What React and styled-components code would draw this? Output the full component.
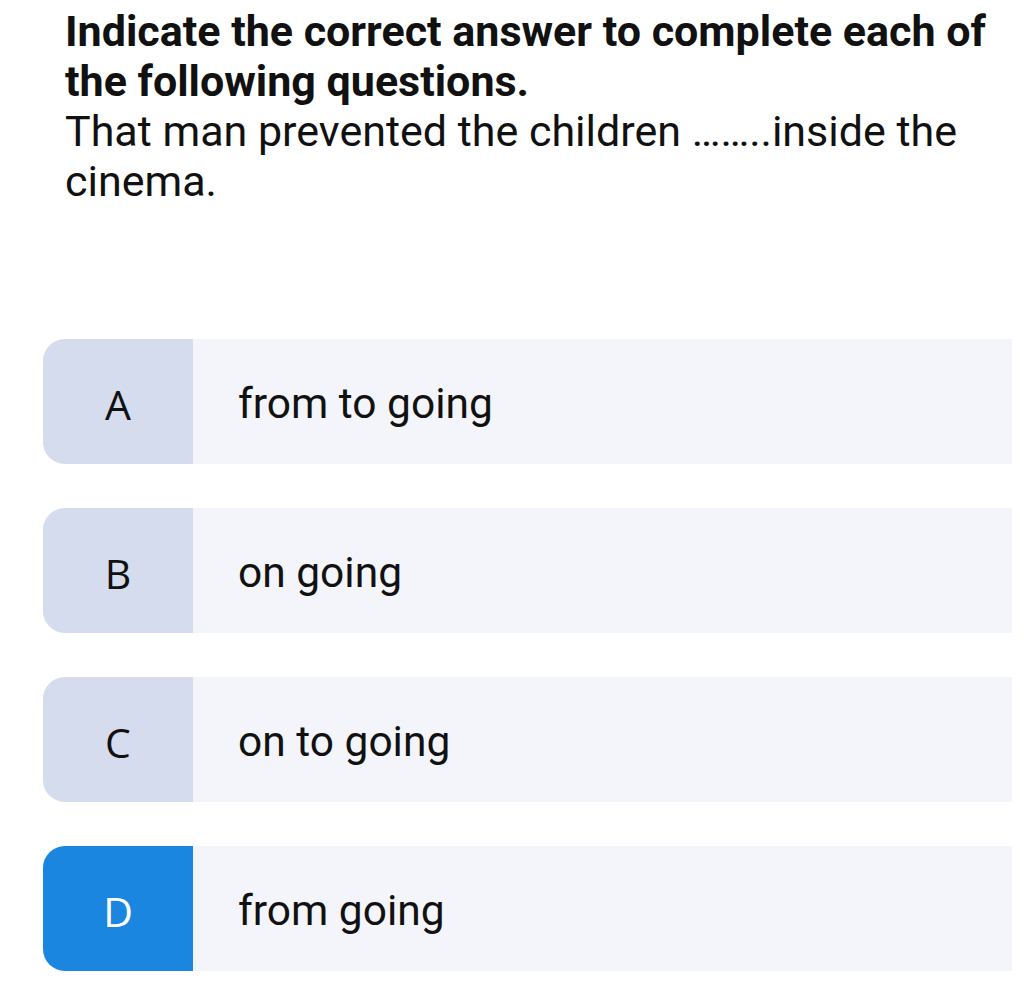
import React from 'react';
import styled, { createGlobalStyle } from 'styled-components';

const GlobalStyle = createGlobalStyle`
    body {
        margin: 0;
        background: #FFFFFF;
        font-family: Roboto, 'Liberation Sans', sans-serif;
        color: #111111;
    }
`

const Page = styled.div`
    width: 1024px;
    min-height: 1003px;
    padding: 0 12px 0 43px;
    box-sizing: border-box;
`

const Question = styled.div`
    padding: 6px 0 0 22px;
    margin-bottom: 133px;
`

const Title = styled.h1`
    margin: 0;
    font-size: 43px;
    font-weight: 700;
    line-height: 50px;
    color: #111111;
`

const Prompt = styled.p`
    margin: 0;
    font-size: 43px;
    font-weight: 400;
    line-height: 50px;
    color: #111111;
`

const Options = styled.div`
    display: flex;
    flex-direction: column;
    gap: 44px;
`

const Option = styled.div`
    display: flex;
    align-items: stretch;
    height: 125px;
    background: #F3F5FA;
    border-radius: 22px 0 0 22px;
    overflow: hidden;
`

const Letter = styled.div`
    width: 150px;
    flex-shrink: 0;
    display: flex;
    align-items: center;
    justify-content: center;
    padding-top: 4px;
    box-sizing: border-box;
    background: ${props => props.selected ? "#1B86E0" : "#D5DCED"};
    color: ${props => props.selected ? "#FFFFFF" : "#111111"};
    font-family: 'Open Sans', 'Noto Sans', sans-serif;
    font-size: 41px;
    font-weight: 400;
`

const Answer = styled.div`
    display: flex;
    align-items: center;
    padding: 4px 0 0 45px;
    font-size: 42.5px;
    color: #111111;
`

const options = [
    { key: "A", text: "from to going" },
    { key: "B", text: "on going" },
    { key: "C", text: "on to going" },
    { key: "D", text: "from going" },
]

const App = () => {
    const selected = "D"

    return (
        <Page>
            <GlobalStyle />
            <Question>
                <Title>Indicate the correct answer to complete each of the following questions.</Title>
                <Prompt>That man prevented the children ……..inside the cinema.</Prompt>
            </Question>
            <Options>
                {options.map(o => (
                    <Option key={o.key}>
                        <Letter selected={o.key === selected}>{o.key}</Letter>
                        <Answer>{o.text}</Answer>
                    </Option>
                ))}
            </Options>
        </Page>
    );
};

export default App;
